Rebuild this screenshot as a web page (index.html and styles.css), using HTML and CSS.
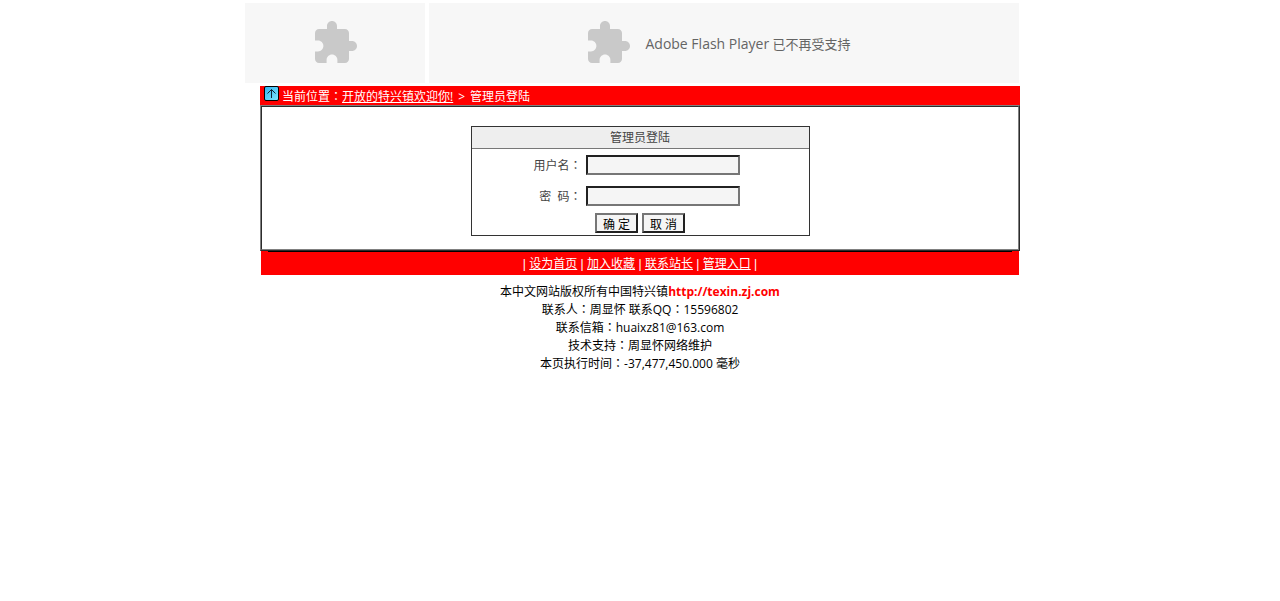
FILE: index.html
```html
<!DOCTYPE html>
<html lang="zh-CN">
<head>
<meta charset="UTF-8">
<meta name="viewport" content="width=device-width, initial-scale=1.0">
<title>管理员登陆</title>
<link rel="stylesheet" href="styles.css">
</head>
<body>

<div class="banner">
    <div class="plugin plugin-logo">
        <svg class="puzzle" viewBox="0 0 24 24"><path d="M20.5 11H19V7c0-1.1-.9-2-2-2h-4V3.5C13 2.12 11.88 1 10.5 1S8 2.12 8 3.5V5H4c-1.1 0-2 .9-2 2v3.8h1.5c1.49 0 2.7 1.21 2.7 2.7s-1.21 2.7-2.7 2.7H2V20c0 1.1.9 2 2 2h3.8v-1.5c0-1.49 1.21-2.7 2.7-2.7s2.7 1.21 2.7 2.7V22H17c1.1 0 2-.9 2-2v-4h1.5c1.38 0 2.5-1.12 2.5-2.5S21.88 11 20.5 11z"/></svg>
    </div>
    <div class="plugin plugin-main">
        <svg class="puzzle" viewBox="0 0 24 24"><path d="M20.5 11H19V7c0-1.1-.9-2-2-2h-4V3.5C13 2.12 11.88 1 10.5 1S8 2.12 8 3.5V5H4c-1.1 0-2 .9-2 2v3.8h1.5c1.49 0 2.7 1.21 2.7 2.7s-1.21 2.7-2.7 2.7H2V20c0 1.1.9 2 2 2h3.8v-1.5c0-1.49 1.21-2.7 2.7-2.7s2.7 1.21 2.7 2.7V22H17c1.1 0 2-.9 2-2v-4h1.5c1.38 0 2.5-1.12 2.5-2.5S21.88 11 20.5 11z"/></svg>
        <span class="notice"><span class="product">Adobe Flash Player</span> 已不再受支持</span>
    </div>
</div>

<div class="container">
    <div class="location">
        <svg class="up" viewBox="0 0 15 15">
            <defs>
                <linearGradient id="sky" x1="0" y1="0" x2="1" y2="1">
                    <stop offset="0" stop-color="#2fb4f0"/>
                    <stop offset="1" stop-color="#7fe4ff"/>
                </linearGradient>
            </defs>
            <rect x="0.5" y="0.5" width="14" height="14" rx="1.5" fill="url(#sky)" stroke="#000"/>
            <path d="M7.5 12V3.5M3.5 7.5l4-4 4 4" fill="none" stroke="#123"/>
        </svg>
        <span>当前位置<span class="colon" lang="zh-TW">：</span><a href="#">开放的特兴镇欢迎你!</a><span class="arrow">&gt;</span>管理员登陆</span>
    </div>

    <div class="panel">
        <form class="login" action="#" method="post">
            <h2>管理员登陆</h2>
            <div class="row">
                <label for="username">用户名<span class="colon" lang="zh-TW">：</span></label>
                <input type="text" id="username" name="username">
            </div>
            <div class="row">
                <label for="password">密&nbsp; 码<span class="colon" lang="zh-TW">：</span></label>
                <input type="password" id="password" name="password">
            </div>
            <div class="buttons">
                <button type="submit">确 定</button>
                <button type="reset">取 消</button>
            </div>
        </form>
    </div>

    <div class="links">
        <hr>
        | <a href="#">设为首页</a> | <a href="#">加入收藏</a> | <a href="#">联系站长</a> | <a href="#">管理入口</a> |
    </div>

    <div class="footer">
        <p>本中文网站版权所有中国特兴镇<a href="#">http://texin.zj.com</a></p>
        <p>联系人<span class="colon" lang="zh-TW">：</span>周显怀 联系QQ<span class="colon" lang="zh-TW">：</span>15596802</p>
        <p>联系信箱<span class="colon" lang="zh-TW">：</span>huaixz81@163.com</p>
        <p>技术支持<span class="colon" lang="zh-TW">：</span>周显怀网络维护</p>
        <p>本页执行时间<span class="colon" lang="zh-TW">：</span>-37,477,450.000 毫秒</p>
    </div>
</div>

</body>
</html>
```
FILE: styles.css
```css
body {
    font-family: "Open Sans", "Noto Sans CJK SC", sans-serif;
    font-size: 12px;
    line-height: 18px;
    color: #000;
    background-color: #fff;
    margin: 0;
    padding-top: 3px;
}

/* full-width colon centred in its box */
.colon {
    font-family: "Noto Sans CJK TC", sans-serif;
    line-height: 1;
}

.banner {
    display: flex;
    gap: 4px;
    box-sizing: border-box;
    max-width: 790px;
    margin: 0 auto 3px;
    padding-right: 16px;
}

.plugin {
    display: flex;
    align-items: center;
    justify-content: center;
    gap: 13px;
    height: 80px;
    background-color: #f7f7f7;
    color: #646464;
    font-size: 13px;
}

.plugin-logo {
    flex: 0 0 180px;
}

.plugin-main {
    flex: 1;
}

.notice {
    padding-top: 1px;
    margin-right: 13px;
}

.product {
    font-size: 14px;
}

.puzzle {
    width: 48px;
    height: 48px;
    fill: #c9c9c9;
}

.container {
    max-width: 760px;
    margin: 0 auto;
}

.location {
    display: flex;
    gap: 3px;
    padding-left: 4px;
    height: 19px;
    line-height: 22px;
    background-color: #f00;
    color: #fff;
}

.location a, .links a {
    color: #fff;
}

.arrow {
    margin: 0 5px;
}

.up {
    width: 15px;
    height: 15px;
}

.panel {
    border: 2px ridge #808080;
    padding: 19px 0 13px;
}

/* login box */
.login {
    box-sizing: border-box;
    width: 339px;
    margin: 0 auto;
    border: 1px solid #333;
    background-color: #fff;
    color: #444;
}

.login h2 {
    margin: 0;
    font-size: 12px;
    font-weight: normal;
    line-height: 21px;
    text-align: center;
    background-color: #eee;
    border-bottom: 1px solid #777;
}

.row {
    display: flex;
    align-items: center;
    height: 31px;
}

.row label {
    width: 110px;
    margin-right: 4px;
    padding-top: 2px;
    text-align: right;
}

.row input {
    box-sizing: border-box;
    width: 154px;
    height: 20px;
    padding: 1px 2px;
    border: 2px inset #767676;
    background-color: #f5f5f5;
    font: inherit;
}

.buttons {
    display: flex;
    justify-content: center;
    gap: 4px;
    padding: 2px 0;
}

.buttons button {
    width: 43px;
    height: 20px;
    padding: 2px 0 0;
    border: 2px outset #767676;
    background-color: #f5f5f5;
    color: #000;
    font: inherit;
    line-height: 16px;
}

.links {
    margin: 0 1px;
    height: 24px;
    line-height: 24px;
    text-align: center;
    background-color: #f00;
    color: #fff;
    font-family: "Liberation Sans", "Noto Sans CJK SC", sans-serif;
}

.links hr {
    height: 1px;
    margin: 0 7px;
    border: none;
    background-color: #000;
}

.footer {
    padding-top: 8px;
    text-align: center;
}

.footer p {
    margin: 0;
}

.footer a {
    color: #f00;
    font-weight: bold;
    text-decoration: none;
}
```
